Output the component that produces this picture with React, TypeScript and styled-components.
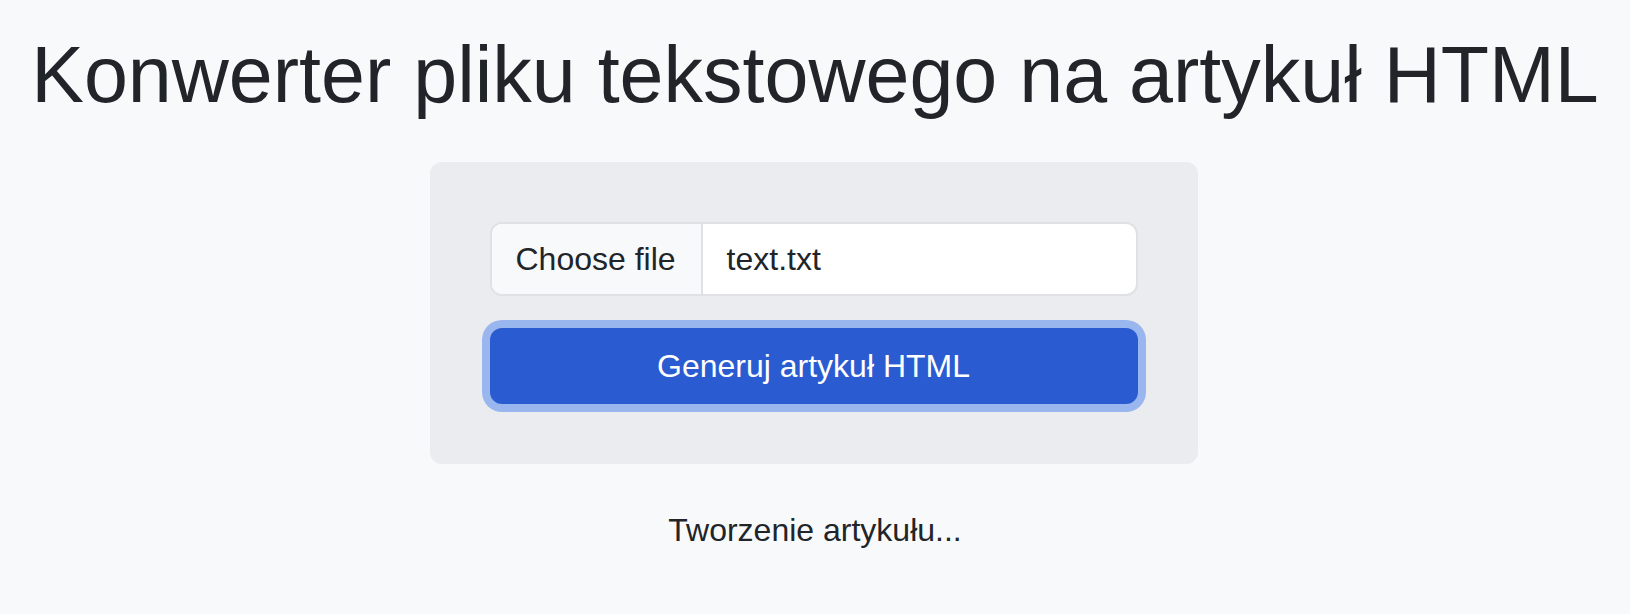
import styled, { createGlobalStyle } from "styled-components";

const GlobalStyle = createGlobalStyle`
  html, body {
    margin: 0;
    padding: 0;
    background-color: #f8f9fa;
    color: #212529;
    font-family: "Liberation Sans", Arial, sans-serif;
  }
`;

const Page = styled.main`
  display: flex;
  flex-direction: column;
  align-items: center;
`;

const Title = styled.h1`
  margin: 27px 0 39px;
  font-size: 79px;
  font-weight: 400;
  line-height: 96px;
  text-align: center;
  white-space: nowrap;
`;

const Card = styled.form`
  box-sizing: border-box;
  width: 768px;
  margin-right: 3px;
  padding: 60px;
  border-radius: 12px;
  background-color: #ebecef;
  display: flex;
  flex-direction: column;
  gap: 32px;
`;

const FileGroup = styled.label`
  box-sizing: border-box;
  display: flex;
  height: 74px;
  border: 2px solid #dfe1e5;
  border-radius: 12px;
  background-color: #fff;
  overflow: hidden;
  font-size: 32px;
  cursor: pointer;
`;

const FileButton = styled.span`
  display: flex;
  align-items: center;
  padding: 0 25px 0 24px;
  background-color: #f8f9fa;
  border-right: 2px solid #dfe1e5;
`;

const FileName = styled.span`
  display: flex;
  align-items: center;
  padding: 0 24px;
`;

const HiddenInput = styled.input`
  display: none;
`;

const SubmitButton = styled.button`
  height: 76px;
  border: none;
  border-radius: 12px;
  background-color: #2a5bd0;
  color: #fff;
  font-family: inherit;
  font-size: 32px;
  box-shadow: 0 0 0 8px #9ab6ee;
  cursor: pointer;
`;

const Status = styled.p`
  margin: 42px 0 0;
  font-size: 32px;
  line-height: 48px;
  text-align: center;
`;

export default function App() {
  return (
    <>
      <GlobalStyle />
      <Page>
        <Title>Konwerter pliku tekstowego na artykuł HTML</Title>
        <Card onSubmit={(e) => e.preventDefault()}>
          <FileGroup>
            <HiddenInput type="file" accept=".txt" />
            <FileButton>Choose file</FileButton>
            <FileName>text.txt</FileName>
          </FileGroup>
          <SubmitButton type="submit">Generuj artykuł HTML</SubmitButton>
        </Card>
        <Status>Tworzenie artykułu...</Status>
      </Page>
    </>
  );
}
